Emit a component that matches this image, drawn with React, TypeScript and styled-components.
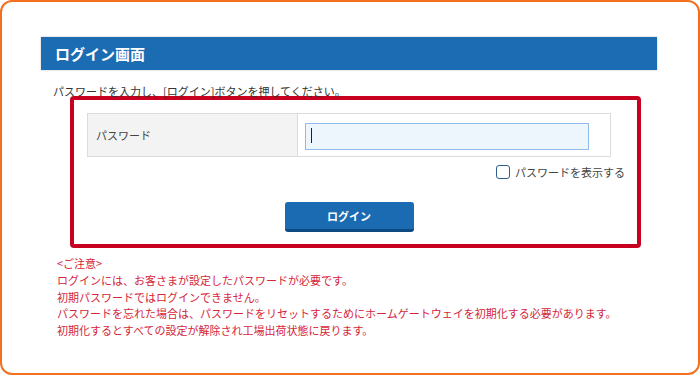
import React from "react";
import styled, { createGlobalStyle } from "styled-components";

const GlobalStyle = createGlobalStyle`
  html, body {
    margin: 0;
    padding: 0;
    background: #ffffff;
  }
  body {
    font-family: "Noto Sans CJK JP", "Liberation Sans", sans-serif;
  }
`;

const Frame = styled.div`
  box-sizing: border-box;
  width: 700px;
  height: 375px;
  border: 2px solid #f37021;
  border-radius: 12px;
  padding: 35px 41px 0 39px;
`;

const HeaderBar = styled.div`
  height: 33px;
  background-color: #1b6cb2;
  box-shadow: 0 0 2px rgba(0, 0, 0, 0.25);
  display: flex;
  align-items: center;
  padding-left: 14px;
  color: #ffffff;
  font-size: 15px;
  font-weight: bold;
`;

const Lead = styled.p`
  margin: 13px 0 0 12px;
  font-size: 11px;
  line-height: 16px;
  color: #333333;
  height: 13px;
`;

const Highlight = styled.div`
  box-sizing: border-box;
  width: 571px;
  height: 152px;
  margin-left: 29px;
  border: 4px solid #c8001f;
  border-radius: 4px;
  padding: 13px 12px 0 13px;
  display: flex;
  flex-direction: column;
`;

const Table = styled.div`
  width: 524px;
  height: 44px;
  box-sizing: border-box;
  display: grid;
  grid-template-columns: 210px 1fr;
  border: 1px solid #dcdcdc;
`;

const LabelCell = styled.div`
  background-color: #f3f3f3;
  border-right: 1px solid #dcdcdc;
  display: flex;
  align-items: center;
  padding-left: 8px;
  font-size: 11px;
  color: #444444;
`;

const InputCell = styled.div`
  display: flex;
  align-items: center;
  padding-left: 7px;
`;

const FieldWrap = styled.div`
  position: relative;
  width: 284px;
  height: 27px;
`;

const Field = styled.input`
  box-sizing: border-box;
  width: 100%;
  height: 100%;
  margin: 0;
  border: 1px solid #8ebbe9;
  background-color: #eef6fd;
  outline: none;
  padding: 0 6px;
`;

const Caret = styled.span`
  position: absolute;
  left: 6px;
  top: 6px;
  width: 1px;
  height: 15px;
  background-color: #222222;
`;

const ShowRow = styled.label`
  display: flex;
  justify-content: flex-end;
  align-items: center;
  gap: 5px;
  margin-top: 7px;
  font-size: 11px;
  color: #444444;
`;

const Box = styled.span`
  box-sizing: border-box;
  width: 14px;
  height: 14px;
  border: 1.5px solid #2d5f8f;
  border-radius: 3px;
  background: #ffffff;
`;

const ButtonRow = styled.div`
  width: 524px;
  display: flex;
  justify-content: center;
  margin-top: 22px;
`;

const LoginButton = styled.button`
  box-sizing: border-box;
  width: 129px;
  height: 30px;
  margin: 0;
  border: none;
  border-bottom: 3px solid #0f4b82;
  border-radius: 3px;
  background-color: #1a6bb1;
  color: #ffffff;
  font-family: inherit;
  font-size: 11px;
  font-weight: bold;
  padding: 0;
`;

const Notes = styled.div`
  margin: 7px 0 0 16px;
  font-size: 11px;
  line-height: 16.75px;
  color: #d4263a;
`;

export default function App() {
  return (
    <>
      <GlobalStyle />
      <Frame>
        <HeaderBar>ログイン画面</HeaderBar>
        <Lead>パスワードを入力し、[ログイン]ボタンを押してください。</Lead>
        <Highlight>
          <Table>
            <LabelCell>パスワード</LabelCell>
            <InputCell>
              <FieldWrap>
                <Field type="password" />
                <Caret />
              </FieldWrap>
            </InputCell>
          </Table>
          <ShowRow>
            <Box />
            パスワードを表示する
          </ShowRow>
          <ButtonRow>
            <LoginButton>ログイン</LoginButton>
          </ButtonRow>
        </Highlight>
        <Notes>
          <div>&lt;ご注意&gt;</div>
          <div>ログインには、お客さまが設定したパスワードが必要です。</div>
          <div>初期パスワードではログインできません。</div>
          <div>パスワードを忘れた場合は、パスワードをリセットするためにホームゲートウェイを初期化する必要があります。</div>
          <div>初期化するとすべての設定が解除され工場出荷状態に戻ります。</div>
        </Notes>
      </Frame>
    </>
  );
}
